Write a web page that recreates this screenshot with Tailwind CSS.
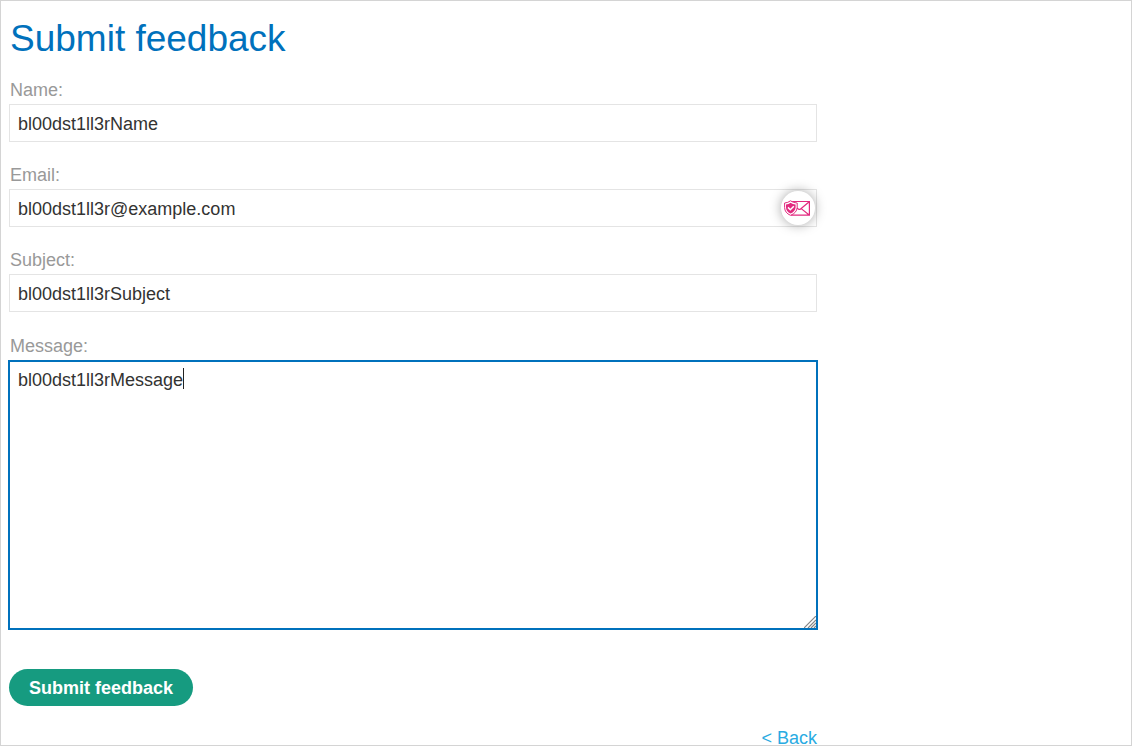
<!DOCTYPE html>
<html lang="en">
<head>
<meta charset="utf-8">
<meta name="viewport" content="width=device-width, initial-scale=1">
<title>Submit feedback</title>
<script src="https://cdn.jsdelivr.net/npm/@tailwindcss/browser@4"></script>
</head>
<body class="h-screen overflow-hidden border border-[#d4d4d4] bg-white font-['Liberation_Sans',Arial,sans-serif] text-lg/5 text-[#333332]">
<main class="w-full max-w-[824px] px-2 pt-[17px]">
  <h1 class="mb-5 pl-px text-[37px]/[42px] text-[#0071bc]">Submit feedback</h1>
  <form class="flex flex-col">
    <label for="name" class="mb-1 pl-px text-[#999]">Name:</label>
    <input id="name" type="text" value="bl00dst1ll3rName" class="mb-[23px] h-[38px] w-full border border-[#e4e4e4] px-2 pt-0.5 outline-none">
    <label for="email" class="mb-1 pl-px text-[#999]">Email:</label>
    <div class="relative mb-[23px]">
      <input id="email" type="email" value="bl00dst1ll3r@example.com" class="block h-[38px] w-full border border-[#e4e4e4] px-2 pt-0.5 outline-none">
      <button type="button" aria-label="Protect email address" class="absolute right-0.5 top-0.5 flex size-[34px] items-center justify-center rounded-full bg-white pr-0.5 shadow-[0_0_12px_rgba(0,0,0,0.35)]">
        <svg class="h-4 w-[26px] shrink-0" viewBox="0 0 26 16" fill="none" stroke="#e22a7f" stroke-width="1.2">
          <path d="M7 1.5H25.4V15.2H7M25.2 1.7L16.3 9.2Q15.4 9.8 14.3 9L12.8 7.8M17.2 8.6L25.2 15"/>
          <path d="M6.5.8Q9.2 2.9 13.2 3V7.5Q12.7 13 6.5 15.3Q.8 13 .6 7.5V3Q4 2.8 6.5.8Z" fill="white" stroke-width="1"/>
          <path d="M6.5 2.8Q8.8 4.4 11.6 4.5V7.5Q11.2 11.7 6.5 13.5Q2.2 11.7 2 7.5V4.5Q4.7 4.4 6.5 2.8Z" fill="#e22a7f" stroke="none"/>
          <path d="M4 7.4L6.3 9.7L9.8 6.2" stroke="white" stroke-width="1.5"/>
        </svg>
      </button>
    </div>
    <label for="subject" class="mb-1 pl-px text-[#999]">Subject:</label>
    <input id="subject" type="text" value="bl00dst1ll3rSubject" class="mb-6 h-[38px] w-full border border-[#e4e4e4] px-2 pt-0.5 outline-none">
    <label for="message" class="mb-1 pl-px text-[#999]">Message:</label>
    <div class="relative -mx-px mb-[39px]">
      <textarea id="message" class="block h-[270px] w-full resize-none border-2 border-[#0071bc] px-2 py-2 caret-transparent outline-none">bl00dst1ll3rMessage</textarea>
      <span class="absolute left-[175px] top-2 h-[21px] w-px bg-[#222]"></span>
      <svg class="absolute bottom-0.5 right-0.5 size-3" viewBox="0 0 12 12" stroke="#858585" stroke-width="1.2" fill="none" aria-hidden="true">
        <path d="M0 12L12 0M4 12L12 4M7 12L12 7M10 12L12 10"/>
      </svg>
    </div>
    <button type="submit" class="h-[37px] self-start rounded-full bg-[#169b80] px-5 font-bold text-white">Submit feedback</button>
  </form>
  <a href="#" class="ml-auto mt-[22px] block w-fit text-[#29abe2]">&lt; Back</a>
</main>
</body>
</html>
